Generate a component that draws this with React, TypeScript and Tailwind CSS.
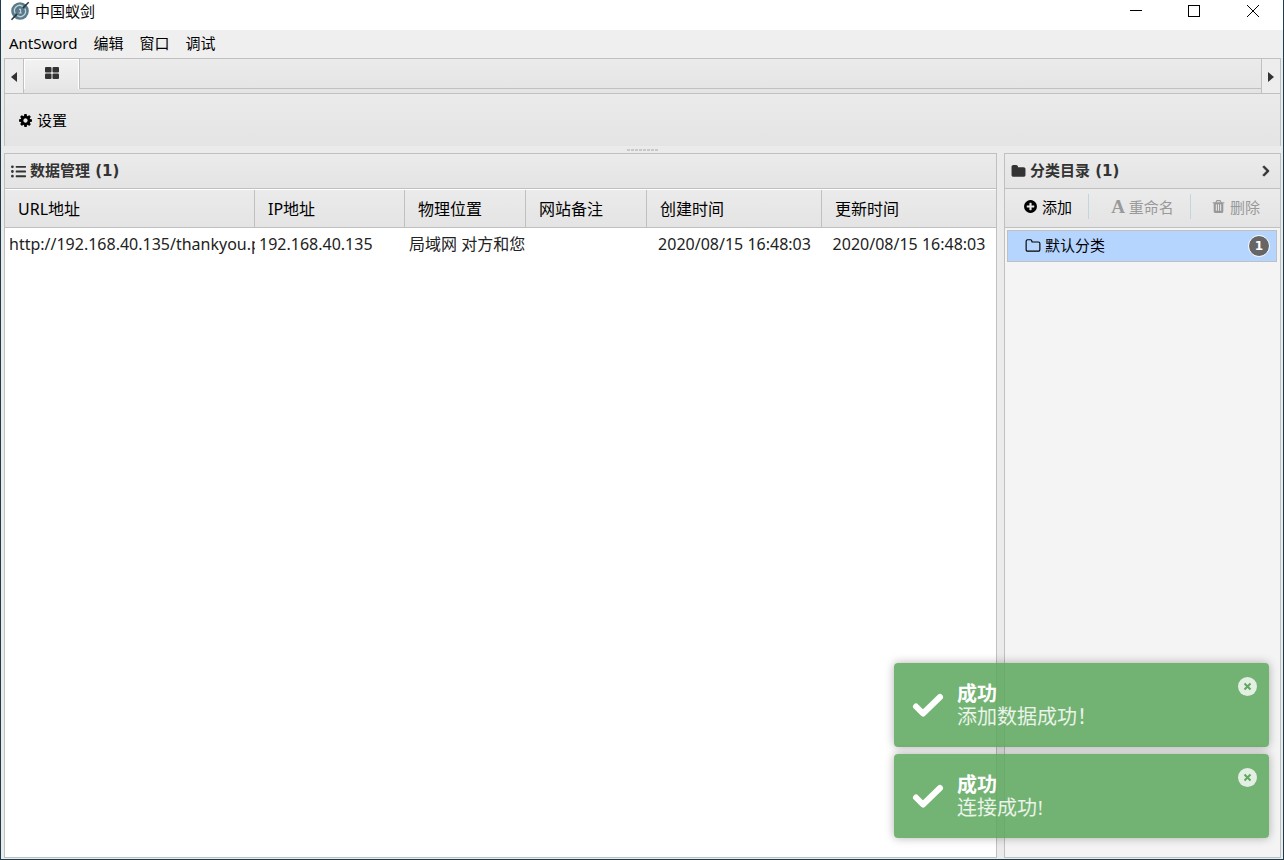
import { useState } from 'react'
import type { ReactNode } from 'react'
import clsx from 'clsx'
import { FaChevronRight, FaListUl } from 'react-icons/fa'

const ICON_PATHS = {
  cog: 'M1152 896q0-106-75-181t-181-75-181 75-75 181 75 181 181 75 181-75 75-181zm512-109v222q0 12-8 23t-20 13l-185 28q-19 54-39 91 35 50 107 138 10 12 10 25t-9 23q-27 37-99 108t-94 71q-12 0-26-9l-138-108q-44 23-91 38-16 136-29 186-7 28-36 28h-222q-14 0-24.500-8.500t-11.500-21.500l-28-184q-49-16-90-37l-141 107q-10 9-25 9-14 0-25-11-126-114-165-168-7-10-7-23 0-12 8-23 15-21 51-66.500t54-70.500q-27-50-41-99l-183-27q-13-2-21-12.500t-8-23.500v-222q0-12 8-23t19-13l186-28q14-46 39-92-40-57-107-138-10-12-10-24 0-10 9-23 26-36 98.500-107.500t94.500-71.500q13 0 26 10l138 107q44-23 91-38 16-136 29-186 7-28 36-28h222q14 0 24.500 8.500t11.500 21.500l28 184q49 16 90 37l142-107q9-9 24-9 13 0 25 10 129 119 165 170 7 8 7 22 0 12-8 23-15 21-51 66.500t-54 70.500q26 50 41 98l183 28q13 2 21 12.500t8 23.500z',
  plus: 'M1344 960v-128q0-26-19-45t-45-19h-256v-256q0-26-19-45t-45-19h-128q-26 0-45 19t-19 45v256h-256q-26 0-45 19t-19 45v128q0 26 19 45t45 19h256v256q0 26 19 45t45 19h128q26 0 45-19t19-45v-256h256q26 0 45-19t19-45zm320-64q0 209-103 385.500t-279.500 279.500-385.500 103-385.500-103-279.500-279.500-103-385.500 103-385.500 279.500-279.500 385.500-103 385.500 103 279.500 279.500 103 385.500z',
  folder: 'M1728 608v704q0 92-66 158t-158 66h-1216q-92 0-158-66t-66-158v-960q0-92 66-158t158-66h320q92 0 158 66t66 158v32h672q92 0 158 66t66 158z',
  folderOpen: 'M1600 1312v-704q0-40-28-68t-68-28h-704q-40 0-68-28t-28-68v-64q0-40-28-68t-68-28h-320q-40 0-68 28t-28 68v960q0 40 28 68t68 28h1216q40 0 68-28t28-68zm128-704v704q0 92-66 158t-158 66h-1216q-92 0-158-66t-66-158v-960q0-92 66-158t158-66h320q92 0 158 66t66 158v32h672q92 0 158 66t66 158z',
  trash: 'M704 1376v-704q0-14-9-23t-23-9h-64q-14 0-23 9t-9 23v704q0 14 9 23t23 9h64q14 0 23-9t9-23zm256 0v-704q0-14-9-23t-23-9h-64q-14 0-23 9t-9 23v704q0 14 9 23t23 9h64q14 0 23-9t9-23zm256 0v-704q0-14-9-23t-23-9h-64q-14 0-23 9t-9 23v704q0 14 9 23t23 9h64q14 0 23-9t9-23zm-544-992h448l-48-117q-7-9-17-11h-317q-10 2-17 11zm928 32v64q0 14-9 23t-23 9h-96v948q0 83-47 143.500t-113 60.500h-832q-66 0-113-58.500t-47-141.500v-952h-96q-14 0-23-9t-9-23v-64q0-14 9-23t23-9h309l70-167q15-37 54-63t79-26h320q40 0 79 26t54 63l70 167h309q14 0 23 9t9 23z',
}

function Icon({ name, className = 'size-[15px]' }: { name: keyof typeof ICON_PATHS; className?: string }) {
  return (
    <svg viewBox="0 0 1792 1792" fill="currentColor" aria-hidden="true" className={clsx('shrink-0', className)}>
      <path d={ICON_PATHS[name]} />
    </svg>
  )
}

function AppLogo() {
  return (
    <svg viewBox="0 0 20 20" className="size-5" aria-hidden="true">
      <circle cx="10" cy="10" r="8.800" fill="#587a8a" />
      <path d="M5.200 12.300a5.200 5.200 0 0 1 7.600-6.800M14.800 7.700a5.200 5.200 0 0 1-7.600 6.800" fill="none" stroke="#c3d2d9" strokeWidth="1.300" />
      <path d="M9 8.300h1.500v3.600M8.800 12h3" fill="none" stroke="#c3d2d9" strokeWidth="1.200" />
      <path d="M1.500 18.700 7 13M13 7l5.700-5.700" stroke="#26343b" strokeWidth="1.500" />
    </svg>
  )
}

const MENUS = ['AntSword', '编辑', '窗口', '调试']

const COLUMNS = [
  { title: 'URL地址', width: 'w-[250px]' },
  { title: 'IP地址', width: 'w-[150px]' },
  { title: '物理位置', width: 'w-[121px]' },
  { title: '网站备注', width: 'w-[121px]' },
  { title: '创建时间', width: 'w-[175px]', centered: true },
  { title: '更新时间', width: '', centered: true },
]

const ROWS = [
  ['http://192.168.40.135/thankyou.p', '192.168.40.135', '局域网 对方和您', '', '2020/08/15 16:48:03', '2020/08/15 16:48:03'],
]

const BAR = 'bg-linear-to-b from-[#ebebeb] to-[#e4e4e4]'

function TitleBar() {
  return (
    <header className="flex h-[30px] items-start justify-between bg-white">
      <div className="flex h-[22px] items-center gap-[5px] pl-[9px]">
        <AppLogo />
        <h1 className="text-[15px] leading-[22px] text-black">中国蚁剑</h1>
      </div>
      <div className="flex h-[22px] items-center">
        <button type="button" aria-label="最小化" className="flex w-[58px] justify-center">
          <svg viewBox="0 0 12 12" className="size-3" shapeRendering="crispEdges"><path d="M0 5.500h12" stroke="#000" /></svg>
        </button>
        <button type="button" aria-label="最大化" className="flex w-[58px] justify-center">
          <svg viewBox="0 0 12 12" className="size-3" shapeRendering="crispEdges"><path d="M.5.5h11v11H.5z" fill="none" stroke="#000" /></svg>
        </button>
        <button type="button" aria-label="关闭" className="flex w-[60px] justify-center">
          <svg viewBox="0 0 12 12" className="size-3"><path d="m0 0 12 12M12 0 0 12" stroke="#000" /></svg>
        </button>
      </div>
    </header>
  )
}

function TabBar() {
  return (
    <div className={'flex h-9 border border-[#c0c0c0] ' + BAR}>
      <button type="button" aria-label="向左" className="flex w-[19px] items-center justify-center border-r border-[#c0c0c0] bg-[#ededed] pt-[2px]">
        <svg viewBox="0 0 6 10" className="h-[10px] w-[6px]"><path d="M6 0v10L0 5z" fill="#333" /></svg>
      </button>
      <div className="mb-1 flex border-r border-[#c0c0c0]">
        <button type="button" aria-label="首页" className="flex w-[55px] justify-center border-x border-t border-white bg-linear-to-b from-[#f2f2f2] to-[#e6e6e6] pt-[7px] text-[#333]">
          <svg viewBox="0 0 14 12" fill="currentColor" className="h-3 w-[14px]" aria-hidden="true">
            <rect width="6.500" height="5.500" rx="1" />
            <rect x="7.500" width="6.500" height="5.500" rx="1" />
            <rect y="6.500" width="6.500" height="5.500" rx="1" />
            <rect x="7.500" y="6.500" width="6.500" height="5.500" rx="1" />
          </svg>
        </button>
      </div>
      <div className="mb-1 flex-1 border-b border-[#c0c0c0]" />
      <button type="button" aria-label="向右" className="flex w-[19px] items-center justify-center border-l border-[#c0c0c0] bg-[#ededed] pt-[2px]">
        <svg viewBox="0 0 6 10" className="h-[10px] w-[6px]"><path d="M0 0v10l6-5z" fill="#333" /></svg>
      </button>
    </div>
  )
}

function PanelHeader({ icon, title, children }: { icon: ReactNode; title: string; children?: ReactNode }) {
  return (
    <div className={'flex h-9 items-center gap-1 border border-[#c0c0c0] px-[6px] text-[#333] ' + BAR}>
      {icon}
      <h2 className="pb-px font-['DejaVu_Sans','Noto_Sans_CJK_SC',sans-serif] text-[15px] leading-5 font-bold">{title}</h2>
      {children}
    </div>
  )
}

function DataPanel() {
  return (
    <section className="flex min-w-0 flex-1 flex-col">
      <PanelHeader icon={<FaListUl className="size-[15px]" />} title="数据管理 (1)" />
      <div className="min-h-0 flex-1 border border-t-0 border-[#c0c0c0] bg-white pt-px">
        <table className="w-full table-fixed border-separate border-spacing-0 text-left text-[16px] leading-6">
          <thead>
            <tr className={'h-[38px] ' + BAR}>
              {COLUMNS.map((c) => (
                <th key={c.title} className={clsx('border-r border-b border-[#c0c0c0] pl-[13px] font-normal text-black last:border-r-0', c.width)}>
                  {c.title}
                </th>
              ))}
            </tr>
          </thead>
          <tbody>
            {ROWS.map((row, i) => (
              <tr key={i} className="h-8 text-[#222]">
                {row.map((cell, j) => (
                  <td key={j} className={clsx('overflow-hidden whitespace-nowrap', COLUMNS[j].centered ? 'text-center' : 'pl-1')}>{cell}</td>
                ))}
              </tr>
            ))}
          </tbody>
        </table>
      </div>
    </section>
  )
}

function CategoryPanel() {
  return (
    <aside className="flex w-[277px] flex-col">
      <PanelHeader icon={<Icon name="folder" />} title="分类目录 (1)">
        <button type="button" aria-label="折叠" className="ml-auto px-[2px]">
          <FaChevronRight className="size-3" stroke="currentColor" strokeWidth="30" />
        </button>
      </PanelHeader>
      <div className={'flex h-[39px] items-center border-x border-b border-[#c0c0c0] pb-[3px] text-[15px] leading-5 ' + BAR}>
        <button type="button" className="flex h-[25px] w-[84px] items-center justify-center gap-1 border-r border-[#c0d8dc] pl-[2px] text-black">
          <Icon name="plus" />添加
        </button>
        <button type="button" disabled className="flex h-[25px] w-[102px] items-center justify-center gap-1 border-r border-[#c0d8dc] pl-[6px] text-[#999]">
          <span aria-hidden="true" className="font-['Liberation_Serif',serif] text-[19px] font-bold">A</span>重命名
        </button>
        <button type="button" disabled className="flex h-[25px] flex-1 items-center justify-center gap-1 text-[#999]">
          <Icon name="trash" />删除
        </button>
      </div>
      <div className="min-h-0 flex-1 border border-t-0 border-[#c0c0c0] bg-[#f4f4f4] py-[2px] pr-[3px] pl-[2px]">
        <button type="button" className="flex h-8 w-full items-center gap-1 border border-[#c0c0c0] bg-[#b5d5ff] pr-[6px] pl-[17px] text-[15px] leading-5 text-black">
          <Icon name="folderOpen" className="size-4" />
          <span className="pb-[2px]">默认分类</span>
          <span className="ml-auto flex size-[22px] items-center justify-center rounded-full border border-white bg-[#666] font-['DejaVu_Sans',sans-serif] text-[12px] leading-5 font-bold text-white">1</span>
        </button>
      </div>
    </aside>
  )
}

function Toast({ message, onClose }: { message: string; onClose: () => void }) {
  return (
    <div role="status" className="flex h-[84px] items-start rounded bg-[#5ba65b]/85 pr-3 pl-[17px] text-white shadow-[0_0_10px_rgba(0,0,0,0.3)]">
      <svg viewBox="0 0 34 28" className="mt-7 h-7 w-[34px]" aria-hidden="true">
        <path d="m5 15.500 7 7L29 6" fill="none" stroke="#fff" strokeWidth="6" strokeLinecap="round" strokeLinejoin="round" />
      </svg>
      <div className="mt-5 ml-3 flex-1 font-['Liberation_Serif','Noto_Sans_CJK_SC',serif] text-[20px] leading-[23px]">
        <strong className="block">成功</strong>
        <p className="text-white/85">{message}</p>
      </div>
      <button type="button" aria-label="关闭" onClick={onClose} className="mt-[14px] opacity-80">
        <svg viewBox="0 0 19 19" className="size-[19px]">
          <circle cx="9.500" cy="9.500" r="9.500" fill="#fff" />
          <path d="m6.500 6.500 6 6M12.500 6.500l-6 6" stroke="#5ba65b" strokeWidth="2" />
        </svg>
      </button>
    </div>
  )
}

export default function App() {
  const [toasts, setToasts] = useState(['添加数据成功！', '连接成功!'])

  return (
    <div className="relative flex h-screen flex-col overflow-hidden border-r border-b border-l border-[#1c3c50] bg-[#ebebeb] font-['Noto_Sans','Noto_Sans_CJK_SC',sans-serif]">
      <TitleBar />
      <nav className="flex h-7 gap-4 bg-[#efefef] px-2 text-[15px] leading-[26px] text-black">
        {MENUS.map((m) => (
          <button key={m} type="button" className="h-[26px]">{m}</button>
        ))}
      </nav>
      <main className="flex min-h-0 flex-1 flex-col pr-[2px] pb-px pl-[3px]">
        <TabBar />
        <div className={'flex h-[52px] items-center border-x border-[#c0c0c0] pl-[13px] ' + BAR}>
          <button type="button" className="flex items-center gap-1 text-[15px] leading-5 text-black">
            <Icon name="cog" />设置
          </button>
        </div>
        <div className="flex h-[7px] items-center justify-center gap-px">
          {Array.from({ length: 8 }, (_, i) => (
            <span key={i} className="h-[2px] w-[3px] bg-[#c8c8c8]" />
          ))}
        </div>
        <div className="flex min-h-0 flex-1 gap-[7px]">
          <DataPanel />
          <CategoryPanel />
        </div>
      </main>
      <div className="absolute right-[14px] bottom-[21px] flex w-[375px] flex-col gap-[7px]">
        {toasts.map((t) => (
          <Toast key={t} message={t} onClose={() => setToasts((list) => list.filter((x) => x !== t))} />
        ))}
      </div>
    </div>
  )
}
